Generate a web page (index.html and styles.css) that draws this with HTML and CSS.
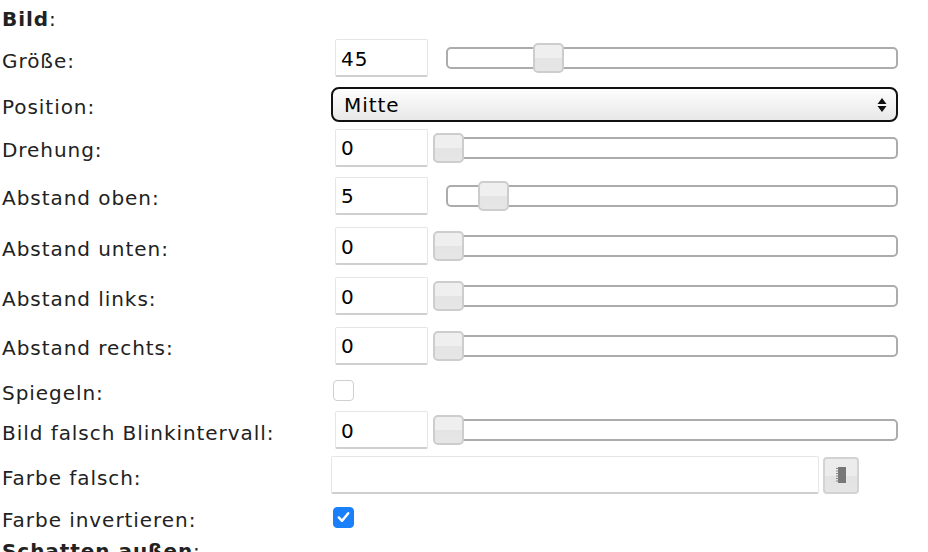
FILE: index.html
```html
<!DOCTYPE html>
<html lang="de">
<head>
<meta charset="utf-8">
<link rel="stylesheet" href="styles.css">
</head>
<body>
<div class="form">
  <div class="row row-head"><span class="label"><b>Bild</b>:</span></div>

  <div class="row row-r1">
    <span class="label">Größe:</span>
    <div class="ctl">
      <input class="num" type="text" value="45">
      <div class="slider"><div class="track"></div><div class="thumb" style="left:100px"></div></div>
    </div>
  </div>

  <div class="row row-sel">
    <span class="label">Position:</span>
    <div class="ctl">
      <div class="select"><span>Mitte</span>
        <svg class="arrows" width="10" height="16" viewBox="0 0 10 16"><path d="M5 1 L9.5 7 H0.5 Z M5 15 L9.5 9 H0.5 Z" fill="#111"/></svg>
      </div>
    </div>
  </div>

  <div class="row row-r3">
    <span class="label">Drehung:</span>
    <div class="ctl">
      <input class="num" type="text" value="0">
      <div class="slider"><div class="track"></div><div class="thumb" style="left:0px"></div></div>
    </div>
  </div>

  <div class="row row-r4">
    <span class="label">Abstand oben:</span>
    <div class="ctl">
      <input class="num" type="text" value="5">
      <div class="slider"><div class="track"></div><div class="thumb" style="left:45px"></div></div>
    </div>
  </div>

  <div class="row row-num">
    <span class="label">Abstand unten:</span>
    <div class="ctl">
      <input class="num" type="text" value="0">
      <div class="slider"><div class="track"></div><div class="thumb" style="left:0px"></div></div>
    </div>
  </div>

  <div class="row row-num">
    <span class="label">Abstand links:</span>
    <div class="ctl">
      <input class="num" type="text" value="0">
      <div class="slider"><div class="track"></div><div class="thumb" style="left:0px"></div></div>
    </div>
  </div>

  <div class="row row-r7">
    <span class="label">Abstand rechts:</span>
    <div class="ctl">
      <input class="num" type="text" value="0">
      <div class="slider"><div class="track"></div><div class="thumb" style="left:0px"></div></div>
    </div>
  </div>

  <div class="row row-chk">
    <span class="label">Spiegeln:</span>
    <div class="ctl"><span class="check"></span></div>
  </div>

  <div class="row row-blink">
    <span class="label">Bild falsch Blinkintervall:</span>
    <div class="ctl">
      <input class="num" type="text" value="0">
      <div class="slider"><div class="track"></div><div class="thumb" style="left:0px"></div></div>
    </div>
  </div>

  <div class="row row-color">
    <span class="label">Farbe falsch:</span>
    <div class="ctl">
      <input class="text" type="text" value="">
      <span class="pick">
        <svg width="12" height="18" viewBox="0 0 12 18">
          <rect x="3" y="1" width="8" height="16" fill="#777"/>
          <path d="M1 2.5h3M1 5h3M1 7.5h3M1 10h3M1 12.5h3M1 15h3" stroke="#8a8a8a" stroke-width="1"/>
        </svg>
      </span>
    </div>
  </div>

  <div class="row row-chk2">
    <span class="label">Farbe invertieren:</span>
    <div class="ctl">
      <span class="check checked">
        <svg width="20" height="20" viewBox="0 0 20 20"><path d="M5 10.5 L8.5 14 L15 6" fill="none" stroke="#fff" stroke-width="2.6" stroke-linecap="round" stroke-linejoin="round"/></svg>
      </span>
    </div>
  </div>

  <div class="row row-head2"><span class="label"><b>Schatten außen</b>:</span></div>
</div>
</body>
</html>
```

FILE: styles.css
```css
html, body {
  margin: 0;
  padding: 0;
  background: #fff;
}
body {
  font-family: "DejaVu Sans", Verdana, sans-serif;
  font-size: 20px;
  letter-spacing: 0.95px;
  color: #222;
  overflow: hidden;
}
.form {
  width: 928px;
}
.row {
  display: grid;
  grid-template-columns: 331px 567px;
  align-items: center;
}
.label {
  padding-left: 2px;
  padding-top: 5px;
  white-space: nowrap;
}
.label b {
  font-weight: bold;
}
.ctl {
  display: flex;
  align-items: center;
}
.row-head { height: 33px; }
.row-r1 { height: 50px; }
.row-sel { height: 42px; }
.row-r3 { height: 45px; }
.row-r4 { height: 51px; }
.row-num { height: 50px; }
.row-r7 { height: 49px; }
.row-chk { height: 40px; }
.row-blink { height: 40px; }
.row-color { height: 50px; }
.row-chk2 { height: 34px; }
.row-head2 { height: 26px; }

.num {
  box-sizing: border-box;
  width: 93px;
  height: 38px;
  margin-left: 4px;
  border: 1px solid #e6e6e6;
  border-bottom: 2px solid #cfcfcf;
  border-radius: 2px;
  padding: 2px 5px 0;
  font-family: "DejaVu Sans", Verdana, sans-serif;
  font-size: 20px;
  letter-spacing: 0.95px;
  color: #000;
  background: #fff;
  outline: none;
}
.slider {
  position: relative;
  flex: 1;
  height: 30px;
  margin-left: 5px;
}
.track {
  position: absolute;
  left: 13px;
  right: 0;
  top: 4px;
  height: 22px;
  box-sizing: border-box;
  border: 2px solid #acacac;
  border-radius: 5px;
  background: #fff;
}
.thumb {
  position: absolute;
  top: 0;
  width: 31px;
  height: 30px;
  box-sizing: border-box;
  border: 2px solid #cdcdcd;
  border-radius: 5px;
  background: linear-gradient(#efefef 0, #efefef 50%, #e4e4e4 50%, #e6e6e6 100%);
}
.select {
  box-sizing: border-box;
  width: 567px;
  height: 35px;
  border: 2px solid #111;
  border-radius: 8px;
  background: linear-gradient(#fdfdfd, #e8e8e8);
  display: flex;
  align-items: center;
  justify-content: space-between;
  padding: 2px 9px 0 11px;
  color: #000;
}
.arrows {
  display: block;
}
.check {
  box-sizing: border-box;
  width: 21px;
  height: 21px;
  margin-left: 2px;
  border: 1px solid #cfcfcf;
  border-radius: 4px;
  background: #fff;
  display: flex;
  align-items: center;
  justify-content: center;
}
.check.checked {
  background: #1a80fa;
  border-color: #1a80fa;
}
.check svg {
  display: block;
}
.text {
  box-sizing: border-box;
  width: 488px;
  height: 38px;
  border: 1px solid #e6e6e6;
  border-bottom: 2px solid #cfcfcf;
  border-radius: 2px;
  font-family: "DejaVu Sans", Verdana, sans-serif;
  font-size: 20px;
  background: #fff;
  outline: none;
}
.pick {
  box-sizing: border-box;
  width: 36px;
  height: 37px;
  margin-left: 4px;
  border: 2px solid #d3d3d3;
  border-radius: 4px;
  background: linear-gradient(#ececec 0, #ececec 50%, #e3e3e3 50%, #e5e5e5 100%);
  display: flex;
  align-items: center;
  justify-content: center;
}
.pick svg {
  display: block;
}
```
